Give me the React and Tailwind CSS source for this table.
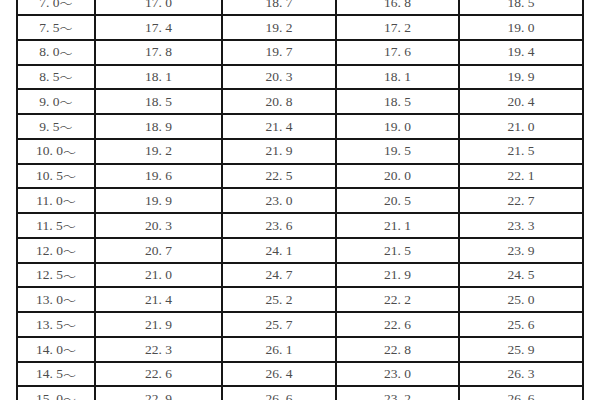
const rows = [
  ["7.0", "17.0", "18.7", "16.8", "18.5"],
  ["7.5", "17.4", "19.2", "17.2", "19.0"],
  ["8.0", "17.8", "19.7", "17.6", "19.4"],
  ["8.5", "18.1", "20.3", "18.1", "19.9"],
  ["9.0", "18.5", "20.8", "18.5", "20.4"],
  ["9.5", "18.9", "21.4", "19.0", "21.0"],
  ["10.0", "19.2", "21.9", "19.5", "21.5"],
  ["10.5", "19.6", "22.5", "20.0", "22.1"],
  ["11.0", "19.9", "23.0", "20.5", "22.7"],
  ["11.5", "20.3", "23.6", "21.1", "23.3"],
  ["12.0", "20.7", "24.1", "21.5", "23.9"],
  ["12.5", "21.0", "24.7", "21.9", "24.5"],
  ["13.0", "21.4", "25.2", "22.2", "25.0"],
  ["13.5", "21.9", "25.7", "22.6", "25.6"],
  ["14.0", "22.3", "26.1", "22.8", "25.9"],
  ["14.5", "22.6", "26.4", "23.0", "26.3"],
  ["15.0", "22.9", "26.6", "23.2", "26.6"],
];

function Num({ value }) {
  const [a, b] = value.split(".");
  return (
    <span className="whitespace-nowrap">
      {a}
      <span className="inline-block w-[0.5em] text-left">.</span>
      {b}
    </span>
  );
}

export default function App() {
  return (
    <div className="w-[600px] h-[400px] overflow-hidden bg-white">
      <div
        className="ml-[16px] mt-[-10.78px] w-[568px] grid grid-cols-[76px_125px_112px_121px_122px] auto-rows-[22.78px] gap-[2px] p-[2px] bg-[#161616] text-[13.5px] text-[#4d4d4d]"
        style={{ fontFamily: '"Liberation Serif", "Noto Sans CJK SC", serif' }}
      >
        {rows.map((r, i) =>
          r.map((c, j) => (
            <div key={i + "-" + j} className="bg-white flex items-center justify-center leading-none">
              <Num value={c} />
              {j === 0 && (
                <span style={{ fontFamily: '"Noto Sans CJK SC", sans-serif' }} className="font-light text-[13px]">～</span>
              )}
            </div>
          ))
        )}
      </div>
    </div>
  );
}
